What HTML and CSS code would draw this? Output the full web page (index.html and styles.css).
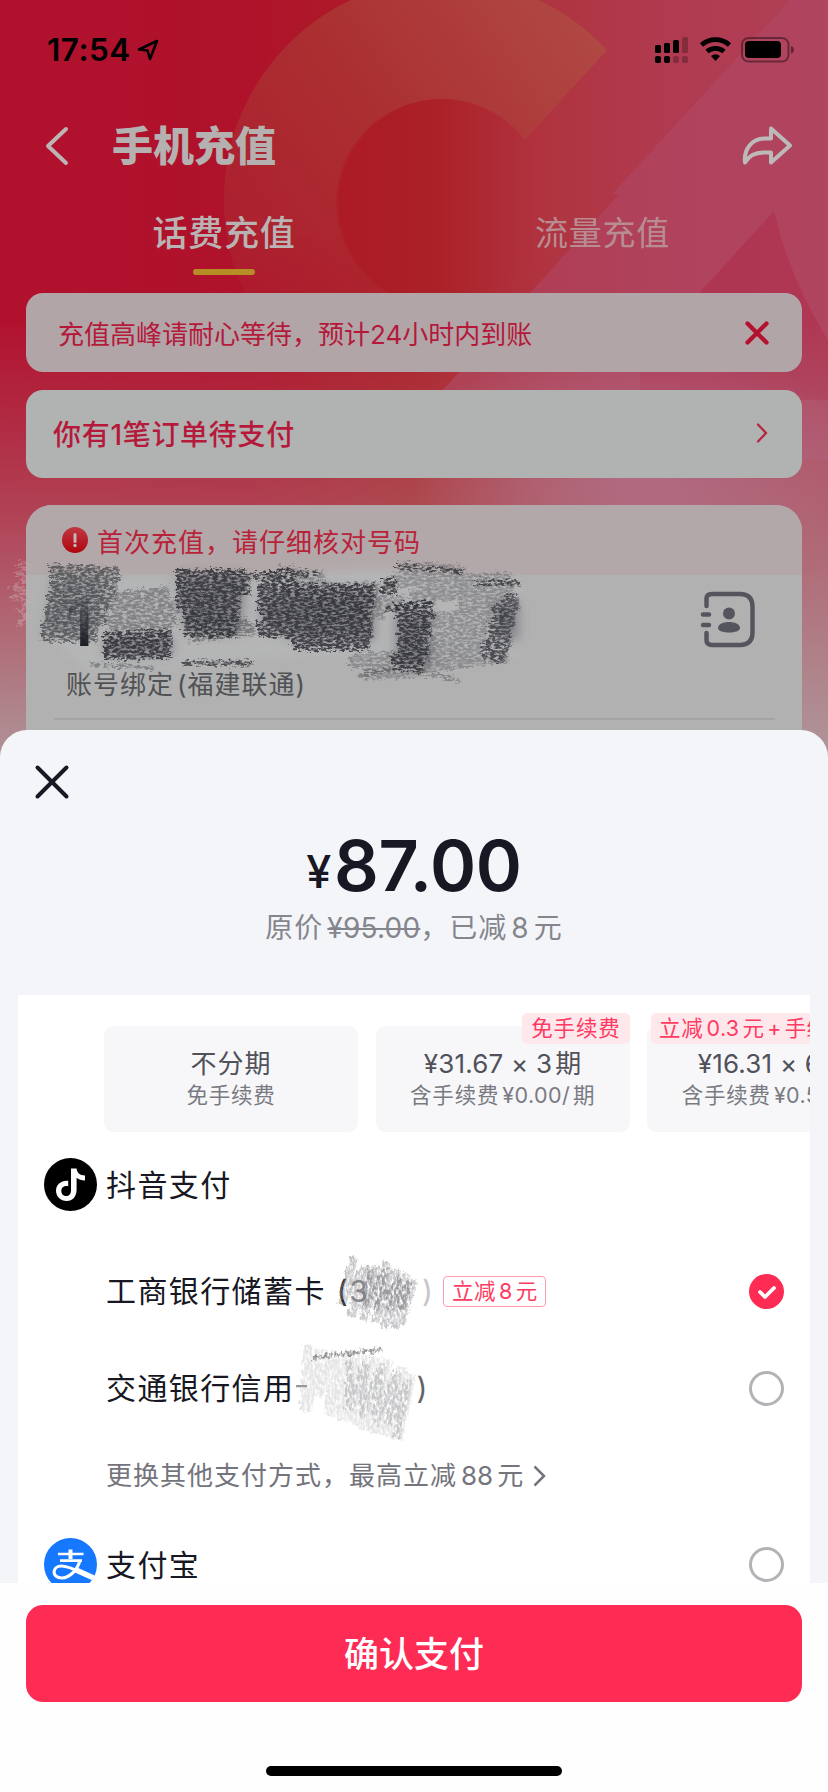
FILE: index.html
```html
<!DOCTYPE html>
<html lang="zh-CN">
<head>
<meta charset="utf-8">
<title>手机充值</title>
<link rel="stylesheet" href="styles.css">
</head>
<body>
<div class="phone">
  <svg class="backdrop" viewBox="0 0 828 780" width="828" height="780" aria-hidden="true">
    <defs>
      <linearGradient id="base" x1="0" y1="0" x2="1" y2="0">
        <stop offset="0" stop-color="#b1112e"/><stop offset=".3" stop-color="#af122b"/>
        <stop offset=".5" stop-color="#ac1f27"/><stop offset=".66" stop-color="#b03440"/>
        <stop offset=".82" stop-color="#b03b51"/><stop offset="1" stop-color="#b04055"/>
      </linearGradient>
      <linearGradient id="ring" gradientUnits="userSpaceOnUse" x1="219" y1="300" x2="600" y2="40">
        <stop offset="0" stop-color="#ad1c2e"/><stop offset=".5" stop-color="#ab2f31"/><stop offset="1" stop-color="#b04844"/>
      </linearGradient>
      <linearGradient id="ringmask" x1="0" y1="0" x2="0" y2="1">
        <stop offset="0" stop-color="#fff"/><stop offset=".55" stop-color="#fff"/><stop offset=".9" stop-color="#222"/>
      </linearGradient>
      <mask id="rm" maskUnits="userSpaceOnUse" x="0" y="-30" width="828" height="480"><rect y="-30" width="828" height="480" fill="url(#ringmask)"/></mask>
      <linearGradient id="core" x1="0" y1="0" x2="1" y2="0">
        <stop offset="0" stop-color="#ac1b24"/><stop offset=".5" stop-color="#aa2026"/><stop offset="1" stop-color="#af3039" stop-opacity="0"/>
      </linearGradient>
      <linearGradient id="fade" x1="0" y1="0" x2="0" y2="1">
        <stop offset="0" stop-color="#b0a0a2" stop-opacity="0"/><stop offset=".42" stop-color="#b0a0a2" stop-opacity=".34"/>
        <stop offset="1" stop-color="#ae9a9d" stop-opacity="1"/>
      </linearGradient>
      <radialGradient id="glow"><stop offset="0" stop-color="#b06286" stop-opacity=".75"/><stop offset="1" stop-color="#b06286" stop-opacity="0"/></radialGradient>
    </defs>
    <rect width="828" height="780" fill="url(#base)"/>
    <g mask="url(#rm)"><path d="M607 50A221 221 0 1 0 440 421V307A104 104 0 1 1 525 140Z" fill="url(#ring)"/></g>
    <circle cx="440" cy="203" r="104" fill="url(#core)" opacity=".55"/>
    <path d="M790 0 612 194H619L380 460H828V0Z" fill="#b0496a" opacity=".5"/>
    <path d="M774 211 640 358V400H828V340Q790 280 774 211Z" fill="#b02848" opacity=".45"/>
    <ellipse cx="640" cy="470" rx="230" ry="130" fill="url(#glow)"/>
    <rect y="320" width="828" height="460" fill="url(#fade)"/>
  </svg>

  <header class="statusbar">
    <span class="clock">17:54</span>
    <svg class="locate" width="24" height="24" viewBox="0 0 24 24"><path d="M21 3 3 11.500 11.500 12.500 14 21Z" fill="none" stroke="#000" stroke-width="2.600" stroke-linejoin="round"/></svg>
    <svg class="signals" width="144" height="30" viewBox="0 0 144 30">
      <g><rect x="5" y="10" width="6" height="8" rx="1.500"/><rect x="14" y="8" width="6" height="10" rx="1.500"/><rect x="23" y="5" width="6" height="13" rx="1.500"/><rect x="5" y="21" width="6" height="7" rx="2"/><rect x="14" y="21" width="6" height="7" rx="2"/></g>
      <g opacity=".25"><rect x="32" y="2" width="6" height="16" rx="1.500"/><rect x="23" y="21" width="6" height="7" rx="2"/><rect x="32" y="21" width="6" height="7" rx="2"/></g>
      <g fill="none" stroke="#000" stroke-width="4.800"><path d="M51.500 10A21 21 0 0 1 79.500 10"/><path d="M57 16.500A13 13 0 0 1 74 16.500"/></g>
      <path d="M61 21Q65.500 17.500 70 21L65.500 26Z"/>
      <rect x="92" y="3" width="46.500" height="23.500" rx="6.500" fill="none" stroke="#000" stroke-opacity=".4" stroke-width="2"/>
      <rect x="95" y="6" width="36" height="17" rx="4"/><path d="M141 11Q144 12 144 14.700 144 17.500 141 18.500Z" opacity=".45"/>
    </svg>
  </header>

  <nav class="titlebar">
    <svg width="24" height="40" viewBox="0 0 24 40"><path d="M21 3 3 20 21 37" class="line-grey"/></svg>
    <h1>手机充值</h1>
    <svg class="share" width="52" height="42" viewBox="0 0 52 42"><path d="M30 3.500 49 20.500 30 37.500V27.500H24C13 27.500 8 31 4 37.500 2.500 24 11 13.500 24 13.500H30Z" class="line-share"/></svg>
  </nav>

  <div class="tabs">
    <div class="tab tab-on">话费充值</div>
    <div class="tab">流量充值</div>
  </div>

  <section class="notice">
    <span>充值高峰请耐心等待，预计24小时内到账</span>
    <svg width="24" height="24" viewBox="0 0 24 24"><path d="M2.500 2.500 21.500 21.500M21.500 2.500 2.500 21.500" stroke="#b4112f" stroke-width="4.300" stroke-linecap="round"/></svg>
  </section>
  <section class="pending">
    <span>你有1笔订单待支付</span>
    <svg width="14" height="22" viewBox="0 0 14 22"><path d="M3 2.500 11 11 3 19.500" fill="none" stroke="#b52743" stroke-width="2.300" stroke-linecap="round"/></svg>
  </section>

  <section class="account">
    <div class="verify">
      <svg width="26" height="26" viewBox="0 0 26 26"><defs><linearGradient id="al" x1="0" y1="0" x2="0" y2="1"><stop stop-color="#bf3844"/><stop offset="1" stop-color="#b0060f"/></linearGradient></defs><circle cx="13" cy="13" r="13" fill="url(#al)"/><path d="M13 7.500V14.500" stroke="#c4b5b5" stroke-width="3" stroke-linecap="round"/><circle cx="13" cy="18.500" r="1.700" fill="#c4b5b5"/></svg>
      <span>首次充值，请仔细核对号码</span>
    </div>
    <div class="number-row">
      <span class="digits">1</span>
      <svg width="58" height="60" viewBox="0 0 58 60" fill="none" stroke="#55555d" stroke-width="4.500" stroke-linecap="round"><path d="M6.500 16V9Q6.500 4 12 4H40Q52.500 4 52.500 17V42Q52.500 55 40 55H12Q6.500 55 6.500 50V43M3 24.500H9M3 35H9"/><circle cx="29" cy="23.500" r="6" fill="#55555d" stroke="none"/><path d="M18 38C18 30 40 30 40 38 40 44 18 44 18 38Z" fill="#55555d" stroke="none"/></svg>
    </div>
    <div class="carrier"><span>账号绑定</span><span class="paren">(福建联通)</span></div>
    <div class="rule"></div>
  </section>

  <svg class="scribble scribble-dark" width="560" height="150" viewBox="0 550 560 150" aria-hidden="true">
    <defs>
      <filter id="chalk" x="-10%" y="-10%" width="120%" height="120%">
        <feTurbulence type="fractalNoise" baseFrequency=".22 .45" numOctaves="4" seed="8" result="n"/>
        <feColorMatrix in="n" type="matrix" values="0 0 0 0 0  0 0 0 0 0  0 0 0 0 0  3.600 0 0 0 -1.100" result="m"/>
        <feDisplacementMap in="SourceGraphic" in2="n" scale="12" xChannelSelector="R" yChannelSelector="G" result="d"/>
        <feComposite in="d" in2="m" operator="in" result="c"/>
        <feGaussianBlur in="c" stdDeviation=".55"/>
      </filter>
      <filter id="soft" x="-20%" y="-30%" width="140%" height="160%"><feGaussianBlur stdDeviation="6"/></filter>
    </defs>
    <path d="M40 580H250L380 568 520 585V655H300L90 672 40 625Z" fill="#b6b7b8" opacity=".8" filter="url(#soft)"/>
    <g fill="#4c4e54" filter="url(#soft)" opacity=".5">
      <path d="M178 575H246L240 632H186ZM262 590H374V640H300L262 625ZM105 638H172V654H105ZM396 612H430V666H396ZM492 602H518V640H500Z"/>
      <path d="M50 578 105 576 96 632H44Z" opacity=".5"/>
    </g>
    <g filter="url(#chalk)" fill="none" stroke="#33353b">
      <g stroke-width="13" opacity=".65">
        <path d="M50 571 120 574 51 587 117 590 48 600 112 603 46 614 108 618 42 627 98 629 42 635 98 636"/>
        <path d="M110 600 170 592 112 610 180 606 110 624 176 619 105 644 172 639" opacity=".6"/>
        <path d="M187 620 250 626 190 636 255 629" opacity=".7"/>
        <path d="M278 572 324 577 285 590 380 588 312 602 405 602 310 618 385 613" opacity=".5"/>
        <path d="M400 568 462 571 392 581 512 579 410 596 514 591 460 603 508 611 420 621 505 628 430 640 504 646 350 662 508 656 365 674 420 670" opacity=".45"/>
      </g>
      <g stroke-width="16" opacity=".9" stroke-linejoin="bevel">
        <path d="M176 577 246 577 178 586 250 586 177 599 240 601 184 614 239 616 184 628 237 630"/>
        <path d="M262 581 294 576 260 591 376 592 259 604 375 602 263 616 372 618 258 629 372 630 293 643 370 643"/>
        <path d="M104 640 172 637 105 652 172 651"/>
        <path d="M395 611 433 609 400 625 430 630 400 642 428 650 394 663 425 665"/>
        <path d="M504 600 516 603 497 614 512 619 492 629 508 640 485 651 506 657" opacity=".8"/>
        <path d="M390 578V594"/>
      </g>
      <g stroke-width="5" opacity=".8"><path d="M246 576 320 573M396 566 466 572M475 583 521 583M183 663 253 663M385 610 435 602"/></g>
      <g stroke-width="4" opacity=".4"><path d="M358 676 395 668 460 680M90 664 154 668"/></g>
      <g stroke="#c9aab0" stroke-width="5" opacity=".5"><path d="M19 563 29 566 19 574 28 580 13 587 29 592 15 597 31 601 20 610 29 617 18 626"/></g>
    </g>
  </svg>

  <main class="sheet">
    <svg class="close" width="40" height="40" viewBox="0 0 40 40"><path d="M5.500 5.500 34.500 34.500M34.500 5.500 5.500 34.500" stroke="#171823" stroke-width="4" stroke-linecap="round"/></svg>
    <div class="price"><span class="yen">¥</span><span>87.00</span></div>
    <div class="original"><span>原价</span><s>¥95.00</s><span>，已减</span><b>8</b><span>元</span></div>

    <div class="panel">
      <div class="plans">
        <div class="plan"><div class="plan-main cjk">不分期</div><div class="plan-sub">免手续费</div></div>
        <div class="plan"><span class="badge">免手续费</span><div class="plan-main">¥31.67 × 3<i>期</i></div><div class="plan-sub">含手续费<i>¥0.00/</i><i>期</i></div></div>
        <div class="plan"><span class="badge badge-wide">立减<i>0.3</i><i>元</i><i>+</i><i>手续费5折</i></span><div class="plan-main">¥16.31 × 6<i>期</i></div><div class="plan-sub">含手续费<i>¥0.50/</i><i>期</i></div></div>
      </div>

      <div class="method method-douyin">
        <svg width="53" height="53" viewBox="0 0 53 53"><circle cx="26.500" cy="26.500" r="26.500" fill="#000"/><path d="M27 10.500H32.500C33 14.500 35.500 17.200 41 17.600V22.500C37.500 22.500 35 21.500 32.600 19.800V31.500C32.600 38.500 28.500 43 22.800 43 16.500 43 12 38.500 12 32.800 12 26.500 17.500 22 24.200 22.800V28.200C20.300 27.500 17.300 29.700 17.300 32.900 17.300 35.800 19.500 38 22.500 38 25.500 38 27 35.500 27 32Z" fill="#fff"/></svg>
        <span>抖音支付</span>
      </div>
      <div class="card-row">
        <span>工商银行储蓄卡</span><span class="card-no">(<i>3</i></span><span class="card-end faint">)</span>
        <span class="tag">立减<i>8</i><i>元</i></span>
        <svg class="radio" width="35" height="35" viewBox="0 0 35 35"><circle cx="17.500" cy="17.500" r="17.500" fill="#fe2c55"/><path d="M11 18 16 23 25 14" fill="none" stroke="#fff" stroke-width="3.800" stroke-linecap="round" stroke-linejoin="round"/></svg>
      </div>
      <div class="card-row card-credit">
        <span>交通银行信用</span><span class="clipped">卡</span><span class="card-end second">)</span>
        <svg class="radio" width="35" height="35" viewBox="0 0 35 35"><circle cx="17.500" cy="17.500" r="16" fill="none" stroke="#b2b3b7" stroke-width="3"/></svg>
      </div>
      <div class="more"><span>更换其他支付方式，最高立减</span><i>88</i><i>元</i>
        <svg width="14" height="24" viewBox="0 0 14 24"><path d="M2.500 2.500 12 12 2.500 21.500" fill="none" stroke="#73747c" stroke-width="2.500"/></svg>
      </div>
      <div class="method method-alipay">
        <svg width="53" height="53" viewBox="0 0 53 53"><defs><clipPath id="ap"><circle cx="26.500" cy="26.500" r="26.500"/></clipPath></defs><circle cx="26.500" cy="26.500" r="26.500" fill="#1677ff"/><g clip-path="url(#ap)" fill="none" stroke="#fff"><path d="M26.500 11.500V21" stroke-width="4"/><path d="M14 16H39.500M16 22.700H38" stroke-width="2.700"/><path d="M36 22C34 31 26 40 18 40 7 40 8 28 17.500 28 27 28 38 36 52 41" stroke-width="3.200"/><path d="M32 32 52 41" stroke-width="5.500"/></g></svg>
        <span>支付宝</span>
        <svg class="radio" width="35" height="35" viewBox="0 0 35 35"><circle cx="17.500" cy="17.500" r="16" fill="none" stroke="#b2b3b7" stroke-width="3"/></svg>
      </div>

      <svg class="scribble scribble-light" width="150" height="210" viewBox="290 1245 150 210" aria-hidden="true">
        <defs><filter id="pencil" x="-15%" y="-15%" width="130%" height="130%">
          <feTurbulence type="fractalNoise" baseFrequency=".4 .2" numOctaves="4" seed="3" result="n"/>
          <feColorMatrix in="n" type="matrix" values="0 0 0 0 0  0 0 0 0 0  0 0 0 0 0  2.600 0 0 0 -.600" result="m"/>
          <feDisplacementMap in="SourceGraphic" in2="n" scale="8" xChannelSelector="R" yChannelSelector="G" result="d"/><feComposite in="d" in2="m" operator="in" result="c"/>
          <feGaussianBlur in="c" stdDeviation=".7"/></filter></defs>
        <g filter="url(#pencil)" fill="none">
          <path d="M354 1258 341 1304 366 1266 351 1316 377 1266 363 1320 387 1262 375 1322 397 1270 384 1328 406 1274 395 1328 414 1280 401 1324" stroke="#8b8c91" stroke-width="8" opacity=".5"/>
          <path d="M372 1268 365 1305 389 1268 376 1310 400 1276 391 1309 411 1282 402 1310" stroke="#737479" stroke-width="7" opacity=".5"/>
          <path d="M309 1345 305 1412 322 1350 318 1395 336 1352 330 1415 350 1352 342 1420 363 1355 354 1424 376 1358 365 1430 389 1360 376 1433 402 1367 386 1436 411 1374 397 1440" stroke="#aaaaad" stroke-width="11" opacity=".3"/>
          <path d="M350 1360V1410L366 1362 363 1417 383 1364 376 1423 398 1372 389 1425 409 1380 397 1438" stroke="#999a9e" stroke-width="8" opacity=".4"/>
          <path d="M313 1358 382 1349M370 1353 382 1349" stroke="#6d6e72" stroke-width="4" opacity=".7"/>
        </g>
      </svg>
    </div>
  </main>

  <footer class="footer">
    <button class="confirm">确认支付</button>
    <div class="home"></div>
  </footer>
</div>
</body>
</html>
```
FILE: styles.css
```css
* { box-sizing: border-box; }
body { margin: 0; background: #fff; }
body, button { font-family: Inter, "Noto Sans CJK SC", sans-serif; }
i, b { font-style: normal; font-weight: 400; }
svg { display: block; flex: none; }

.phone { position: relative; width: 828px; height: 1792px; overflow: hidden; display: flex; flex-direction: column; isolation: isolate; }
.backdrop { position: absolute; inset: 0 auto auto 0; z-index: -1; }

.statusbar { height: 100px; padding: 35px 34px 0 47px; display: flex; align-items: flex-start; flex: none; }
.clock { font-size: 31.500px; font-weight: 600; line-height: 30px; width: 83px; white-space: nowrap; letter-spacing: .5px; }
.locate { margin: 3px 0 0 6px; }
.signals { margin-left: auto; }

.titlebar { height: 91px; padding: 0 35px 0 45px; display: flex; align-items: center; flex: none; }
.titlebar h1 { margin: 0 auto 0 43px; font-size: 41px; font-weight: 800; line-height: 50px; color: #b5b1b1; }
.line-grey { fill: none; stroke: #bcb5b5; stroke-width: 4; stroke-linecap: round; stroke-linejoin: round; }
.line-share { fill: none; stroke: #bdb9b9; stroke-width: 4; stroke-linejoin: round; }

.tabs { height: 102px; padding: 18px 35px 0 36px; display: grid; grid-template-columns: 376px 1fr; flex: none; text-align: center; line-height: 48px; }
.tab { font-size: 33px; letter-spacing: .7px; color: #b88d92; }
.tab-on { font-size: 35px; font-weight: 500; color: #bab3b3; display: flex; flex-direction: column; align-items: center; letter-spacing: .8px; }
.tab-on::after { content: ""; width: 62px; height: 6px; margin-top: 12px; border-radius: 3px; background: #b78d25; }

.notice, .pending { margin: 0 26px; border-radius: 17px; display: flex; align-items: center; justify-content: space-between; flex: none; }
.notice { height: 79px; padding: 0 33px 0 32px; background: #b2a5a8; color: #b4193a; font-size: 26px; }
.pending { height: 88px; margin-top: 18px; padding: 0 33px 2px 27px; background: #b1b2b2; color: #b51a3b; font-size: 28px; font-weight: 500; letter-spacing: .7px; }

.account { margin: 27px 26px 0; height: 225px; border-radius: 26px 26px 0 0; background: #b1b1b1; overflow: hidden; flex: none; }
.verify { height: 70px; display: flex; align-items: center; gap: 9px; padding-left: 36px; background: #b2a8a9; color: #b92339; font-size: 26px; letter-spacing: 1px; }
.number-row { height: 88px; display: flex; justify-content: space-between; padding: 15px 44px 0 40px; }
.digits { position: relative; z-index: 1; font-size: 64px; font-weight: 600; line-height: 66px; color: #1c1e25; mask-image: linear-gradient(rgba(0,0,0,.25) 20%, #000 75%); }
.carrier { height: 44px; padding-left: 40px; line-height: 44px; font-size: 26px; letter-spacing: 1px; color: #505154; display: flex; gap: 3px; }
.rule { height: 2px; margin: 11px 27px 0 28px; background: #a4a4a4; }

.scribble { position: absolute; pointer-events: none; overflow: visible; }
.scribble-dark { left: 0; top: 550px; }
.scribble-light { left: 272px; top: 250px; }

.sheet { position: relative; height: 853px; border-radius: 27px 27px 0 0; background: #f4f5f9; padding-top: 32px; flex: none; }
.close { margin-left: 32px; }
.price { display: flex; justify-content: center; align-items: baseline; height: 84px; margin: 22px 0 0; line-height: 84px; color: #171823; font-size: 70px; font-weight: 600; letter-spacing: -.3px; }
.yen { font-size: 45px; font-weight: 500; margin-right: 3px; position: relative; top: -3px; }
.original { height: 40px; margin-top: 0; display: flex; justify-content: center; line-height: 40px; font-size: 28px; letter-spacing: 1px; color: #85868d; }
.original s { margin-left: 4px; letter-spacing: .2px; }
.original b { margin: 0 4px; }

.panel { position: relative; margin: 47px 18px 0; height: 588px; background: #fff; overflow: hidden; }
.plans { display: flex; gap: 17.500px; padding: 31px 0 0 86px; }
.plan { position: relative; flex: none; width: 254px; height: 106px; padding-top: 20px; border-radius: 9px; background: #f7f7fa; text-align: center; white-space: nowrap; }
.plan-main { font-size: 26px; line-height: 36px; letter-spacing: .2px; color: #505159; }
.plan-main.cjk { letter-spacing: 1px; }
.plan-main i { margin-left: 3px; }
.plan-sub { font-size: 21.500px; line-height: 28px; letter-spacing: .8px; color: #7a7b82; margin-top: -1px; }
.plan-sub i { margin-left: 3px; letter-spacing: .4px; }
.badge { position: absolute; right: 0; top: -13px; height: 31px; padding: 0 9px; border-radius: 5px; background: #ffe8ec; color: #fe3b62; font-size: 21.500px; line-height: 31px; letter-spacing: .8px; }
.badge i + i, .badge i { margin-left: 3px; letter-spacing: .3px; }
.badge-wide { right: auto; left: 4px; padding: 0 8px; }

.method { display: flex; align-items: center; padding: 0 26px; color: #171823; font-size: 30px; letter-spacing: 1.400px; }
.method > span { margin-left: 9px; line-height: 40px; }
.method-douyin { height: 53px; margin-top: 26px; }
.radio { margin-left: auto; }
.card-row { display: flex; align-items: center; height: 40px; margin-top: 60px; padding: 0 26px 0 88px; color: #171823; font-size: 30px; letter-spacing: 1.400px; line-height: 40px; }
.card-no { margin-left: 11px; }
.card-no i { color: #85868a; }
.card-end { margin-left: 53px; color: #85868a; }
.faint { color: #c5c6c9; }
.card-credit { margin-top: 57px; }
.clipped { width: 13px; overflow: hidden; opacity: .45; }
.second { margin-left: 109px; color: #62636a; }
.tag { display: block; width: 103px; height: 31px; margin-left: 9px; border: 1.500px solid #ff9bae; border-radius: 4px; text-align: center; color: #fe3b62; font-size: 21.500px; line-height: 28px; letter-spacing: .5px; white-space: nowrap; }
.tag i { margin-left: 3px; }
.more { display: flex; align-items: center; height: 40px; margin-top: 48px; padding-left: 88px; color: #73747c; font-size: 26px; letter-spacing: 1px; line-height: 40px; }
.more i { margin-left: 4px; }
.more i:first-of-type { letter-spacing: 0; }
.more svg { margin-left: 8px; }
.method-alipay { height: 53px; margin-top: 42px; }

.footer { flex: 1; background: #fefefe; padding: 22px 26px 0; display: flex; flex-direction: column; align-items: center; }
.confirm { width: 100%; height: 97px; border: 0; border-radius: 17px; background: #fe2c55; color: #fff; font-size: 35px; font-weight: 500; line-height: 98px; padding: 0; }
.home { width: 296px; height: 10px; margin-top: 64px; border-radius: 5px; background: #000; }
```
